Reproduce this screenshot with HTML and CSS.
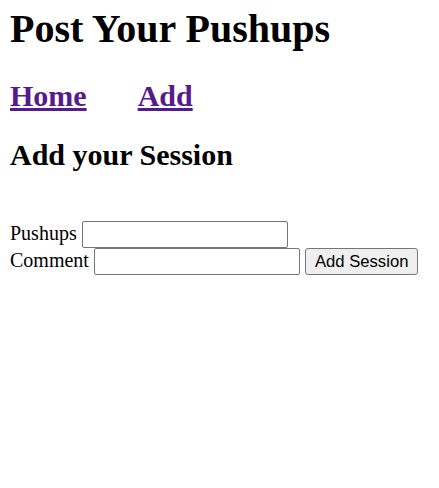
FILE: index.html
```html
<!DOCTYPE html>
<html>
<head>
<meta charset="utf-8">
<link rel="stylesheet" href="styles.css">
</head>
<body>
<h1 class="title">Post Your Pushups</h1>
<h2 class="nav"><a class="nav-link" href="#">Home</a><a class="nav-link" href="#">Add</a></h2>
<h2 class="heading">Add your Session</h2>
<form class="form">
<label class="label">Pushups <input class="field" type="text"></label><br>
<label class="label">Comment <input class="field" type="text"></label>
<button class="btn" type="button">Add Session</button>
</form>
</body>
</html>
```
FILE: styles.css
```css
body {
  margin: 5px 10px 10px;
  font-family: "Liberation Serif", "Times New Roman", serif;
  font-size: 20px;
}
.title {
  font-size: 40px;
  margin: 0 0 27px;
}
.nav,
.heading {
  font-size: 30px;
  margin: 25px 0;
}
.nav-link {
  color: #551a8b;
  margin-right: 51px;
}
.form {
  margin-top: 49px;
}
.field {
  box-sizing: border-box;
  width: 206px;
  height: 27px;
  border: 1px solid #767676;
  border-radius: 2px;
  font-family: "Liberation Sans", Arial, sans-serif;
  font-size: 16.67px;
  padding: 1px 2px;
  vertical-align: baseline;
}
.btn {
  box-sizing: border-box;
  height: 27px;
  padding: 1px 9px;
  border: 1px solid #767676;
  border-radius: 3px;
  background: #efefef;
  color: #000;
  font-family: "Liberation Sans", Arial, sans-serif;
  font-size: 16.67px;
}
```
